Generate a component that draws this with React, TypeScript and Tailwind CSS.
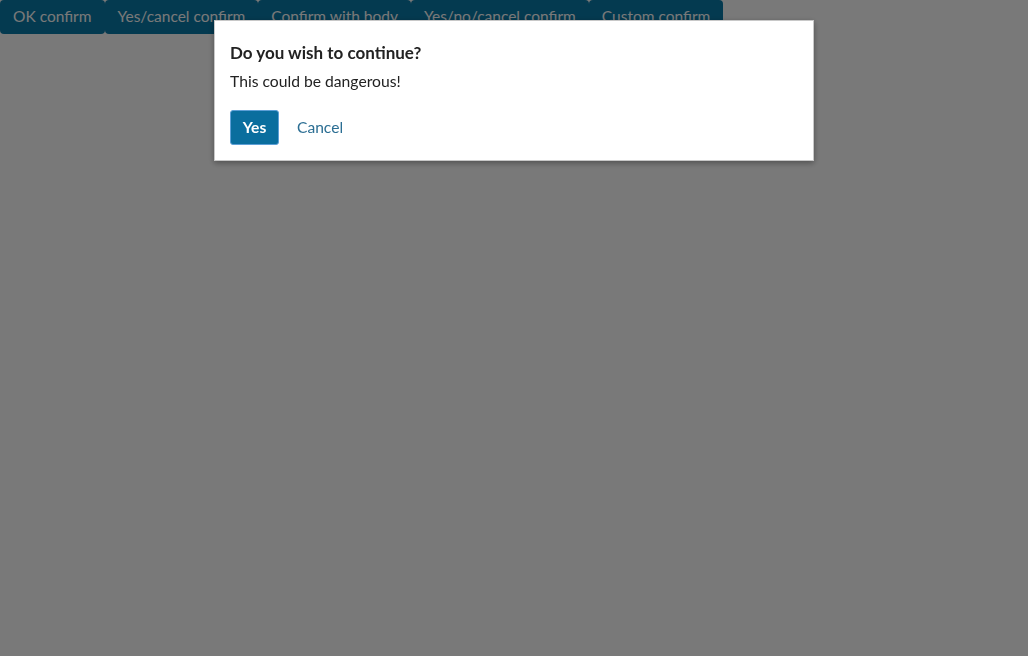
import { useState } from 'react';

const demos = ['OK confirm', 'Yes/cancel confirm', 'Confirm with body', 'Yes/no/cancel confirm', 'Custom confirm'];

export default function App() {
  const [open, setOpen] = useState(true);

  return (
    <div className="relative min-h-screen bg-white" style={{ fontFamily: 'Lato, "Noto Sans", sans-serif' }}>
      {/* Demo triggers */}
      <div className="flex">
        {demos.map((label) => (
          <button
            key={label}
            onClick={() => setOpen(true)}
            className="h-[34px] px-[13px] rounded-[4px] bg-[#0a7aa8] text-white text-[15.5px] leading-none"
          >
            {label}
          </button>
        ))}
      </div>

      {/* Overlay */}
      {open && (
        <div className="fixed inset-0 bg-black/[0.525] flex justify-center items-start pt-5">
          <div className="w-[600px] bg-white border border-[#c8c8c8] shadow-[0_2px_6px_rgba(0,0,0,0.35)] px-[15px] pt-[20px] pb-[15px] text-[#222]">
            <h2 className="text-[17px] font-bold leading-[23px]">Do you wish to continue?</h2>
            <p className="mt-[7px] text-[15.7px] leading-[20px]">This could be dangerous!</p>
            <div className="mt-[19px] flex items-center gap-[6px]">
              <button
                onClick={() => setOpen(false)}
                className="h-[35px] w-[49px] rounded-[3px] bg-[#0a6e9e] border border-[#5d9fd6] text-white text-[15.6px] font-bold"
              >
                Yes
              </button>
              <button
                onClick={() => setOpen(false)}
                className="h-[35px] px-[12px] text-[#2b6e93] text-[15.6px]"
              >
                Cancel
              </button>
            </div>
          </div>
        </div>
      )}
    </div>
  );
}
